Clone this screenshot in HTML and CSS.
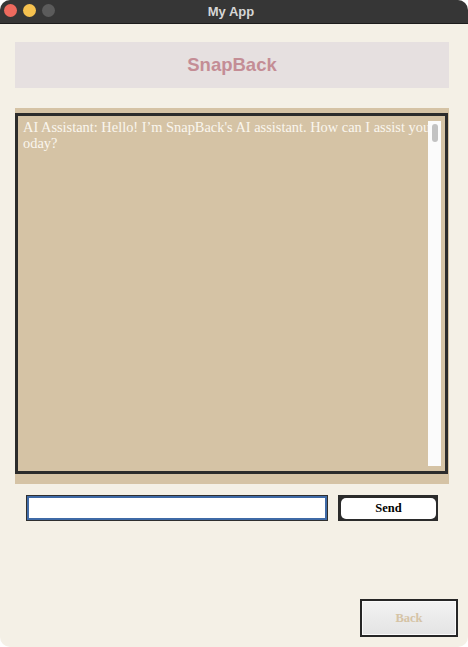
FILE: index.html
```html
<!DOCTYPE html>
<html>
<head>
<meta charset="utf-8">
<link rel="stylesheet" href="styles.css">
</head>
<body>
<div class="window">
  <div class="titlebar">
    <div class="lights">
      <span class="light red"></span>
      <span class="light yellow"></span>
      <span class="light grey"></span>
    </div>
    <div class="title">My App</div>
  </div>
  <div class="content">
    <div class="header">SnapBack</div>
    <div class="chat-frame">
      <div class="chat-box">
        <div class="chat-text">AI Assistant: Hello! I’m SnapBack's AI assistant. How can I assist you today?</div>
        <div class="scrollbar"><div class="thumb"></div></div>
      </div>
    </div>
    <div class="input-row">
      <div class="input"></div>
      <div class="send-frame"><div class="send">Send</div></div>
    </div>
    <div class="spacer"></div>
    <div class="back-row">
      <div class="back"><div class="back-inner">Back</div></div>
    </div>
  </div>
</div>
</body>
</html>
```

FILE: styles.css
```css
html, body {
  margin: 0;
  padding: 0;
  background: #ffffff;
}
.window {
  width: 468px;
  height: 647px;
  border-radius: 10px;
  overflow: hidden;
  background: #f4f0e6;
  display: flex;
  flex-direction: column;
}
.titlebar {
  height: 23px;
  background: #363636;
  border-bottom: 1px solid #1c1c1c;
  position: relative;
  display: flex;
  align-items: center;
  justify-content: center;
}
.lights {
  position: absolute;
  left: 4px;
  top: 4px;
  display: flex;
  gap: 6px;
}
.light {
  width: 13px;
  height: 13px;
  border-radius: 50%;
  display: block;
}
.red { background: #ee6a5e; }
.yellow { background: #f5c14f; }
.grey { background: #5b5b5b; }
.title {
  font-family: "Liberation Sans", sans-serif;
  font-weight: 700;
  font-size: 13px;
  color: #d6d6d6;
  margin-left: -6px;
}
.content {
  flex: 1;
  display: flex;
  flex-direction: column;
  padding: 18px 19px 10px 15px;
}
.header {
  height: 46px;
  background: #e6e0e0;
  display: flex;
  align-items: center;
  justify-content: center;
  font-family: "Liberation Sans", sans-serif;
  font-weight: 700;
  font-size: 18.5px;
  color: #c48d95;
}
.chat-frame {
  margin-top: 20px;
  height: 376px;
  background: #d5c3a5;
  padding: 5px 1px 10px 0;
  box-sizing: border-box;
  display: flex;
}
.chat-box {
  flex: 1;
  border: 3px solid #2b2b2b;
  background: #d5c3a5;
  position: relative;
  overflow: hidden;
}
.chat-text {
  width: 416px;
  padding: 3px 0 0 5px;
  font-family: "Liberation Serif", "DejaVu Serif", serif;
  font-size: 14.4px;
  line-height: 16px;
  color: #faf6ee;
  word-break: break-all;
}
.scrollbar {
  position: absolute;
  top: 5px;
  bottom: 5px;
  right: 4px;
  width: 13px;
  background: #fbfbfb;
}
.thumb {
  margin: 3px 0 0 4px;
  width: 6px;
  height: 18px;
  border-radius: 3px;
  background: #c2c2c2;
}
.input-row {
  margin-top: 11px;
  padding-left: 11px;
  display: flex;
  gap: 10px;
}
.input {
  width: 302px;
  height: 26px;
  box-sizing: border-box;
  border: 1px solid #2f2f2f;
  box-shadow: inset 0 0 0 2px #3f6aa6;
  background: #ffffff;
}
.send-frame {
  width: 100px;
  height: 26px;
  box-sizing: border-box;
  background: #2b2b2b;
  padding: 3px 2px 2px 3px;
  display: flex;
}
.send {
  flex: 1;
  background: #ffffff;
  border-radius: 5px;
  display: flex;
  align-items: center;
  justify-content: center;
  font-family: "Liberation Serif", serif;
  font-weight: 700;
  font-size: 12.5px;
  color: #000;
}
.spacer {
  flex: 1;
}
.back-row {
  display: flex;
  justify-content: flex-end;
  margin-right: -9px;
}
.back {
  width: 98px;
  height: 38px;
  box-sizing: border-box;
  border: 2px solid #262626;
  padding: 1px;
  background: #fafafa;
  display: flex;
}
.back-inner {
  flex: 1;
  background: linear-gradient(#f2f2f2, #e4e4e4);
  display: flex;
  align-items: center;
  justify-content: center;
  font-family: "Liberation Serif", serif;
  font-weight: 700;
  font-size: 12.5px;
  color: #d5c3a5;
}
```
